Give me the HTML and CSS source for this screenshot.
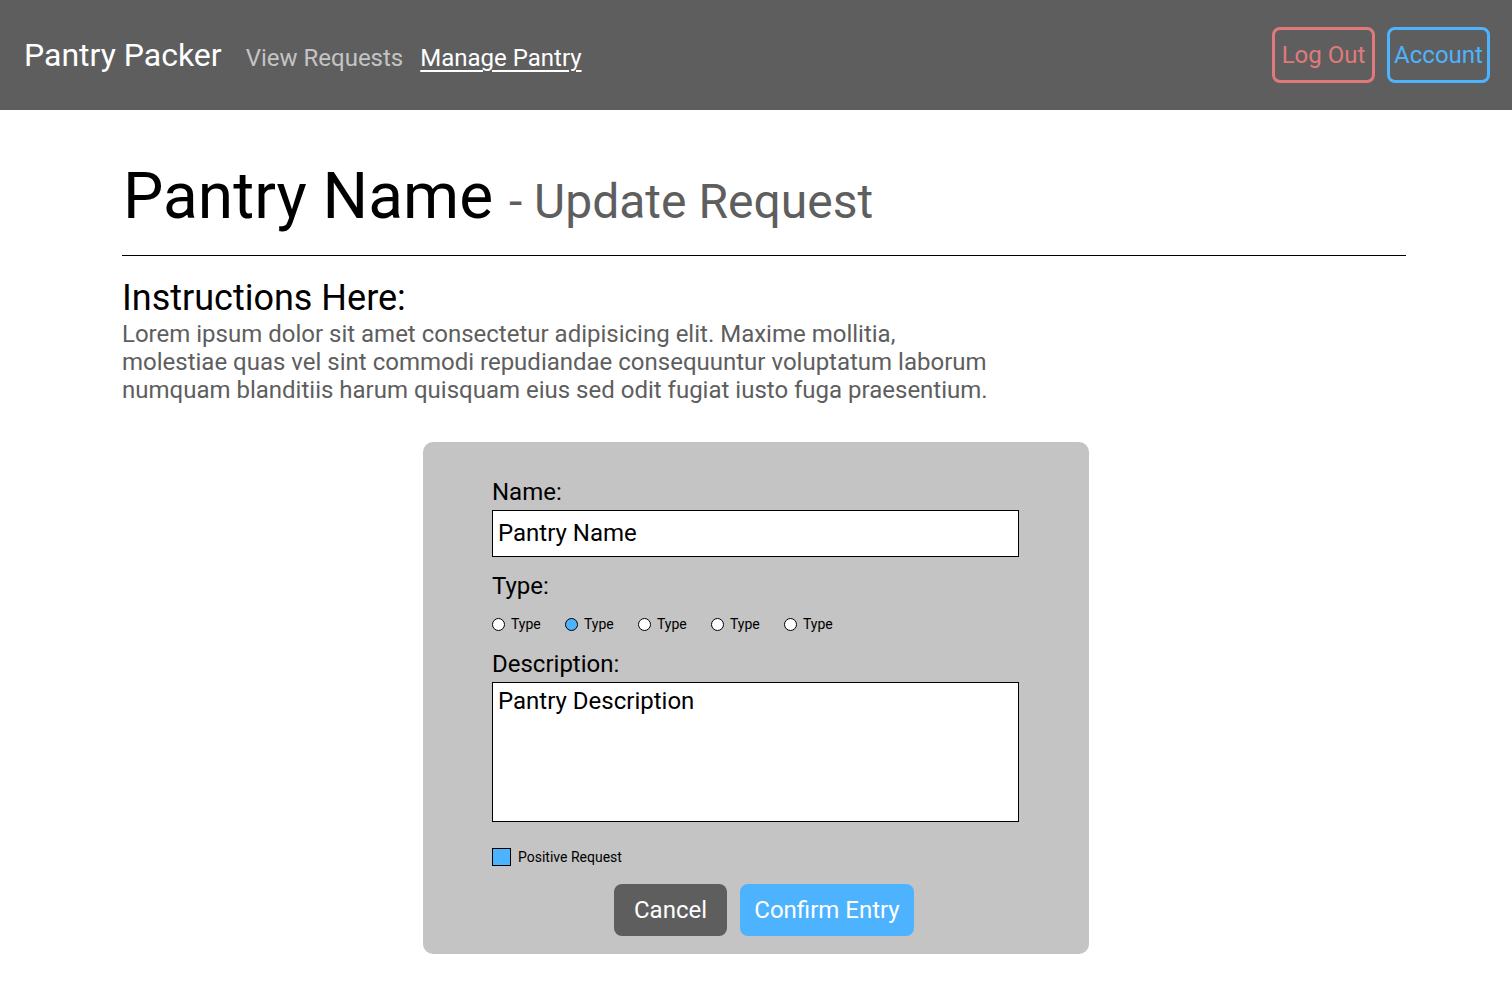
FILE: index.html
```html
<!DOCTYPE html>
<html>
<head>
<meta charset="utf-8">
<link rel="stylesheet" href="styles.css">
</head>
<body>
<header class="topbar">
  <nav class="nav">
    <span class="brand">Pantry Packer</span>
    <a class="nav-link">View Requests</a>
    <a class="nav-link active">Manage Pantry</a>
  </nav>
  <div class="actions">
    <button class="btn-outline logout">Log Out</button>
    <button class="btn-outline account">Account</button>
  </div>
</header>
<main class="main">
  <h1 class="title">Pantry Name <span class="subtitle">- Update Request</span></h1>
  <hr class="rule">
  <h2 class="instr-title">Instructions Here:</h2>
  <p class="instr-text">Lorem ipsum dolor sit amet consectetur adipisicing elit. Maxime mollitia, molestiae quas vel sint commodi repudiandae consequuntur voluptatum laborum numquam blanditiis harum quisquam eius sed odit fugiat iusto fuga praesentium.</p>
  <section class="card">
    <div class="label name-label">Name:</div>
    <div class="field">Pantry Name</div>
    <div class="label type-label">Type:</div>
    <div class="radios">
      <span class="radio"><span class="dot"></span>Type</span>
      <span class="radio"><span class="dot on"></span>Type</span>
      <span class="radio"><span class="dot"></span>Type</span>
      <span class="radio"><span class="dot"></span>Type</span>
      <span class="radio"><span class="dot"></span>Type</span>
    </div>
    <div class="label desc-label">Description:</div>
    <div class="field area">Pantry Description</div>
    <div class="check"><span class="box"></span>Positive Request</div>
    <div class="buttons">
      <button class="btn cancel">Cancel</button>
      <button class="btn confirm">Confirm Entry</button>
    </div>
  </section>
</main>
</body>
</html>
```

FILE: styles.css
```css
* { box-sizing: border-box; }
html, body { margin: 0; padding: 0; }
body {
  font-family: Roboto, "Liberation Sans", sans-serif;
  background: #fff;
  color: #000;
  width: 1512px;
  height: 982px;
  overflow: hidden;
}
.topbar {
  height: 110px;
  background: #5e5e5e;
  display: flex;
  align-items: center;
  justify-content: space-between;
  padding: 0 22px 0 24px;
}
.nav {
  display: flex;
  align-items: baseline;
}
.brand {
  color: #fff;
  font-size: 32px;
  margin-right: 24px;
}
.nav-link {
  color: #c4c4c4;
  font-size: 24px;
  margin-right: 17px;
}
.nav-link.active {
  color: #fff;
  text-decoration: underline;
  text-underline-offset: 4px;
  text-decoration-thickness: 1.5px;
}
.actions {
  display: flex;
  gap: 12px;
}
.btn-outline {
  font-family: inherit;
  background: transparent;
  font-size: 24px;
  height: 56px;
  width: 103px;
  border-radius: 8px;
  border: 3px solid;
  padding: 0;
}
.logout { color: #e07a7a; border-color: #e07a7a; }
.account { color: #4db3ff; border-color: #4db3ff; }

.main {
  padding: 0 106px 0 122px;
}
.title {
  margin: 49px 0 0 1px;
  font-weight: 400;
  font-size: 64px;
  line-height: 75px;
}
.subtitle {
  font-size: 48px;
  color: #5e5e5e;
}
.rule {
  margin: 16px 0 0 0;
  border: 0;
  border-top: 1px solid #000;
  height: 0;
}
.instr-title {
  margin: 21px 0 0 0;
  font-weight: 400;
  font-size: 36px;
  line-height: 42px;
}
.instr-text {
  margin: 1px 0 0 0;
  font-size: 24px;
  line-height: 28px;
  color: #5e5e5e;
  width: 880px;
}
.card {
  margin: 38px 0 0 301px;
  width: 666px;
  height: 512px;
  background: #c4c4c4;
  border-radius: 10px;
  padding: 36px 69px 0 69px;
  display: flex;
  flex-direction: column;
}
.label {
  font-size: 24px;
  line-height: 28px;
}
.field {
  margin-top: 4px;
  width: 527px;
  height: 47px;
  border: 1.5px solid #000;
  background: #fff;
  font-size: 24px;
  line-height: 44px;
  padding: 0 5px;
}
.field.area {
  height: 140px;
  line-height: 36px;
}
.type-label { margin-top: 15px; }
.radios {
  display: flex;
  margin-top: 16px;
  height: 16px;
  align-items: center;
}
.radio {
  display: flex;
  align-items: center;
  font-size: 14px;
  width: 73px;
}
.dot {
  width: 13px;
  height: 13px;
  border-radius: 50%;
  border: 1px solid #000;
  background: #fff;
  margin-right: 6px;
}
.dot.on { background: #4db3ff; }
.desc-label { margin-top: 18px; }
.check {
  margin-top: 26px;
  display: flex;
  align-items: center;
  font-size: 14px;
  height: 18px;
}
.box {
  width: 19px;
  height: 18px;
  background: #4db3ff;
  border: 1px solid #000;
  margin-right: 7px;
}
.buttons {
  margin-top: 18px;
  margin-left: 122px;
  display: flex;
  gap: 13px;
}
.btn {
  font-family: inherit;
  font-size: 24px;
  color: #fff;
  border: 0;
  border-radius: 8px;
  height: 52px;
  padding: 0;
}
.cancel { background: #5e5e5e; width: 113px; }
.confirm { background: #4db3ff; width: 174px; }
```
